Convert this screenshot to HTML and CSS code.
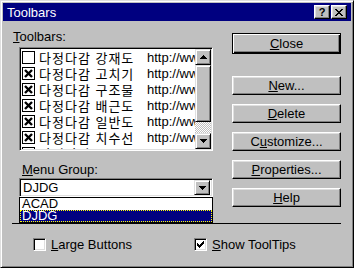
FILE: index.html
```html
<!DOCTYPE html>
<html lang="ko">

<head>
    <meta charset="UTF-8">
    <title>Toolbars</title>
    <link rel="stylesheet" href="styles.css">
</head>

<body>
    <div class="window">
        <div class="titlebar">
            <span class="title">Toolbars</span>
            <div class="caption-buttons">
                <span class="cap-btn">?</span>
                <span class="cap-btn">
                    <svg width="8" height="7" viewBox="0 0 8 7"><path d="M0 0h2v1H0zM6 0h2v1H6zM1 1h2v1H1zM5 1h2v1H5zM2 2h4v1H2zM3 3h2v1H3zM2 4h4v1H2zM1 5h2v1H1zM5 5h2v1H5zM0 6h2v1H0zM6 6h2v1H6z" fill="#000"/></svg>
                </span>
            </div>
        </div>

        <div class="main">
            <div class="left">
                <div class="label"><u>T</u>oolbars:</div>
                <div class="listbox">
                    <div class="items">
                        <div class="item">
                            <svg class="box" width="13" height="13" viewBox="0 0 13 13"><rect x="0.5" y="0.5" width="12" height="12" fill="#fff" stroke="#000"/></svg>
                            <span class="name">다정다감 강재도</span><span class="url">http://www.djdg.com</span>
                        </div>
                        <div class="item">
                            <svg class="box" width="13" height="13" viewBox="0 0 13 13"><rect x="0.5" y="0.5" width="12" height="12" fill="#fff" stroke="#000"/><path d="M3 3L10 10M10 3L3 10" stroke="#000" stroke-width="2.4"/></svg>
                            <span class="name">다정다감 고치기</span><span class="url">http://www.djdg.com</span>
                        </div>
                        <div class="item">
                            <svg class="box" width="13" height="13" viewBox="0 0 13 13"><rect x="0.5" y="0.5" width="12" height="12" fill="#fff" stroke="#000"/><path d="M3 3L10 10M10 3L3 10" stroke="#000" stroke-width="2.4"/></svg>
                            <span class="name">다정다감 구조물</span><span class="url">http://www.djdg.com</span>
                        </div>
                        <div class="item">
                            <svg class="box" width="13" height="13" viewBox="0 0 13 13"><rect x="0.5" y="0.5" width="12" height="12" fill="#fff" stroke="#000"/><path d="M3 3L10 10M10 3L3 10" stroke="#000" stroke-width="2.4"/></svg>
                            <span class="name">다정다감 배근도</span><span class="url">http://www.djdg.com</span>
                        </div>
                        <div class="item">
                            <svg class="box" width="13" height="13" viewBox="0 0 13 13"><rect x="0.5" y="0.5" width="12" height="12" fill="#fff" stroke="#000"/><path d="M3 3L10 10M10 3L3 10" stroke="#000" stroke-width="2.4"/></svg>
                            <span class="name">다정다감 일반도</span><span class="url">http://www.djdg.com</span>
                        </div>
                        <div class="item">
                            <svg class="box" width="13" height="13" viewBox="0 0 13 13"><rect x="0.5" y="0.5" width="12" height="12" fill="#fff" stroke="#000"/><path d="M3 3L10 10M10 3L3 10" stroke="#000" stroke-width="2.4"/></svg>
                            <span class="name">다정다감 치수선</span><span class="url">http://www.djdg.com</span>
                        </div>
                        <div class="item">
                            <svg class="box" width="13" height="13" viewBox="0 0 13 13"><rect x="0.5" y="0.5" width="12" height="12" fill="#fff" stroke="#000"/><path d="M3 3L10 10M10 3L3 10" stroke="#000" stroke-width="2.4"/></svg>
                            <span class="name short">다정다감 Utility</span><span class="url">http://www.djdg.com</span>
                        </div>
                    </div>
                    <div class="scrollbar">
                        <div class="sb-btn">
                            <svg width="7" height="4" viewBox="0 0 7 4"><path d="M3 0h1v1H3zM2 1h3v1H2zM1 2h5v1H1zM0 3h7v1H0z" fill="#000"/></svg>
                        </div>
                        <div class="sb-thumb"></div>
                        <div class="sb-track"></div>
                        <div class="sb-btn">
                            <svg width="7" height="4" viewBox="0 0 7 4"><path d="M0 0h7v1H0zM1 1h5v1H1zM2 2h3v1H2zM3 3h1v1H3z" fill="#000"/></svg>
                        </div>
                    </div>
                </div>

                <div class="label menu-label"><u>M</u>enu Group:</div>
                <div class="combo">
                    <span class="combo-text">DJDG</span>
                    <span class="combo-btn">
                        <svg width="7" height="4" viewBox="0 0 7 4"><path d="M0 0h7v1H0zM1 1h5v1H1zM2 2h3v1H2zM3 3h1v1H3z" fill="#000"/></svg>
                    </span>
                </div>
                <div class="popup">
                    <div class="opt">ACAD</div>
                    <div class="opt selected">DJDG</div>
                </div>
            </div>

            <div class="buttons">
                <button class="btn default"><u>C</u>lose</button>
                <button class="btn first"><u>N</u>ew...</button>
                <button class="btn"><u>D</u>elete</button>
                <button class="btn">C<u>u</u>stomize...</button>
                <button class="btn"><u>P</u>roperties...</button>
                <button class="btn"><u>H</u>elp</button>
            </div>
        </div>

        <div class="separator"></div>

        <div class="options">
            <div class="check"><span class="cb"></span><span><u>L</u>arge Buttons</span></div>
            <div class="check">
                <span class="cb">
                    <svg width="7" height="7" viewBox="0 0 7 7"><path d="M0 2h1v3H0zM1 3h1v3H1zM2 4h1v3H2zM3 3h1v3H3zM4 2h1v3H4zM5 1h1v3H5zM6 0h1v3H6z" fill="#000"/></svg>
                </span>
                <span><u>S</u>how ToolTips</span>
            </div>
        </div>
    </div>
</body>

</html>
```

FILE: styles.css
```css
body {
    margin: 0;
    background-color: #c0c0c0;
}

.window {
    width: 354px;
    height: 268px;
    box-sizing: border-box;
    padding: 2px;
    background-color: #c0c0c0;
    border: 1px solid;
    border-color: #dfdfdf #000 #000 #dfdfdf;
    box-shadow: inset 1px 1px #fff, inset -1px -1px #808080;
    font-family: "Liberation Sans", "Noto Sans CJK KR", sans-serif;
    font-size: 13px;
    color: #000;
}

/* title bar */
.titlebar {
    height: 18px;
    background-color: #000080;
    color: #fff;
    display: flex;
    align-items: center;
    padding: 0 4px 0 4px;
}

.title {
    font-size: 13px;
}

.caption-buttons {
    margin-left: auto;
    display: flex;
    gap: 1px;
}

.cap-btn {
    width: 16px;
    height: 14px;
    box-sizing: border-box;
    background-color: #c0c0c0;
    border: 1px solid;
    border-color: #fff #000 #000 #fff;
    box-shadow: inset -1px -1px #808080, inset 1px 1px #dfdfdf;
    color: #000;
    font-weight: bold;
    font-size: 11px;
    line-height: 12px;
    display: flex;
    align-items: center;
    justify-content: center;
}

/* main area */
.main {
    display: flex;
    height: 202px;
    padding: 0 10px;
}

.left {
    width: 200px;
    padding-top: 8px;
    position: relative;
}

.label {
    height: 15px;
    line-height: 15px;
}

.listbox {
    display: flex;
    width: 194px;
    height: 104px;
    box-sizing: border-box;
    margin: 3px 0 0 6px;
    border: 1px solid;
    border-color: #808080 #fff #fff #808080;
    box-shadow: inset 1px 1px #000, inset -1px -1px #dfdfdf;
    padding: 1px;
    background-color: #fff;
}

.items {
    flex: 1;
    overflow: hidden;
    background-color: #fff;
}

.item {
    display: flex;
    align-items: center;
    height: 16px;
    padding-left: 1px;
    white-space: nowrap;
}

.box {
    flex: none;
    margin-right: 4px;
}

.name {
    flex: none;
    width: 108px;
    letter-spacing: 1px;
}

.name.short {
    width: 101px;
}

.scrollbar {
    width: 16px;
    display: flex;
    flex-direction: column;
}

.sb-btn,
.sb-thumb,
.combo-btn {
    box-sizing: border-box;
    background-color: #c0c0c0;
    border: 1px solid;
    border-color: #dfdfdf #000 #000 #dfdfdf;
    box-shadow: inset 1px 1px #fff, inset -1px -1px #808080;
}

.sb-btn {
    height: 16px;
    display: flex;
    align-items: center;
    justify-content: center;
}

.sb-thumb {
    height: 57px;
}

.sb-track {
    flex: 1;
    background: repeating-conic-gradient(#fff 0 25%, #c0c0c0 0 50%) 0 0 / 2px 2px;
}

.menu-label {
    margin: 11px 0 0 9px;
}

.combo {
    display: flex;
    align-items: center;
    width: 194px;
    height: 19px;
    box-sizing: border-box;
    margin: 1px 0 0 6px;
    border: 1px solid;
    border-color: #808080 #fff #fff #808080;
    box-shadow: inset 1px 1px #000, inset -1px -1px #dfdfdf;
    padding: 2px;
    background-color: #fff;
}

.combo-text {
    flex: 1;
    padding-left: 1px;
    line-height: 15px;
}

.combo-btn {
    width: 16px;
    height: 15px;
    display: flex;
    align-items: center;
    justify-content: center;
}

/* open drop-down list */
.popup {
    position: absolute;
    top: 176px;
    left: 6px;
    width: 194px;
    height: 26px;
    box-sizing: border-box;
    border: 1px solid #000;
    background-color: #fff;
}

.opt {
    height: 12px;
    line-height: 12px;
    padding-left: 2px;
}

.opt.selected {
    background-color: #000080;
    color: #fff;
    outline: 1px dotted #ffff00;
    outline-offset: -1px;
}

/* right buttons */
.buttons {
    margin-left: auto;
    width: 109px;
    padding-top: 12px;
    display: flex;
    flex-direction: column;
}

.btn {
    width: 109px;
    height: 19px;
    box-sizing: border-box;
    margin: 9px 0 0 0;
    padding: 0;
    background-color: #c0c0c0;
    border: 1px solid;
    border-color: #fff #000 #000 #fff;
    box-shadow: inset -1px -1px #808080, inset 1px 1px #dfdfdf;
    font-family: inherit;
    font-size: 13px;
    color: #000;
}

.btn.default {
    height: 21px;
    margin-top: 0;
    border-color: #000;
    box-shadow: inset 1px 1px #fff, inset -1px -1px #000, inset -2px -2px #808080;
}

.btn.first {
    margin-top: 22px;
}

.separator {
    height: 1px;
    margin: 0 10px 0 9px;
    background-color: #000;
}

/* bottom options */
.options {
    display: grid;
    grid-template-columns: 161px auto;
    margin-top: 13px;
    padding-left: 30px;
}

.check {
    display: flex;
    align-items: center;
    height: 15px;
    gap: 5px;
}

.cb {
    width: 13px;
    height: 13px;
    box-sizing: border-box;
    border: 1px solid;
    border-color: #808080 #fff #fff #808080;
    box-shadow: inset 1px 1px #000, inset -1px -1px #dfdfdf;
    background-color: #fff;
    display: flex;
    align-items: center;
    justify-content: center;
}
```
